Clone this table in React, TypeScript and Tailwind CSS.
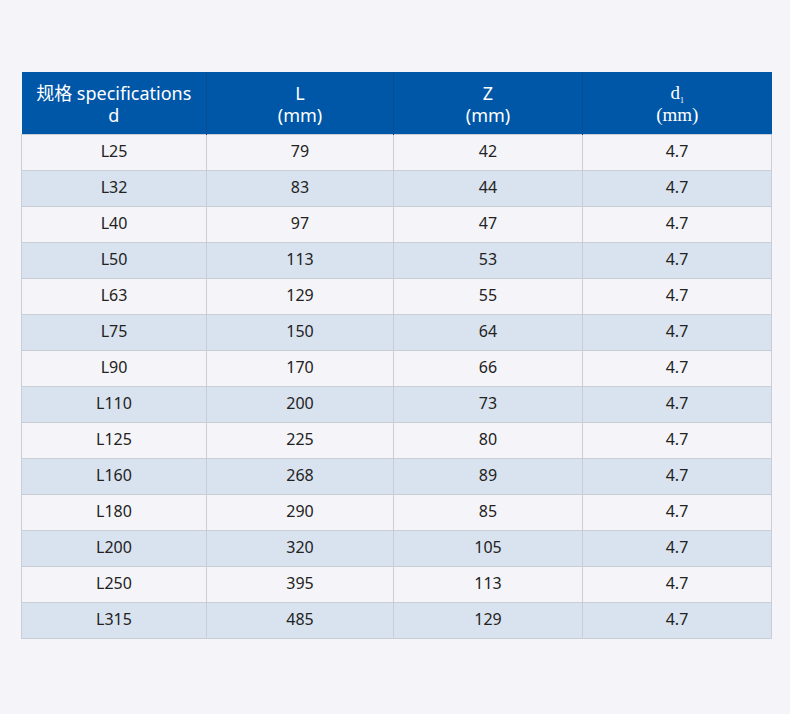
const rows: [string, string, string, string][] = [
  ["L25", "79", "42", "4.7"],
  ["L32", "83", "44", "4.7"],
  ["L40", "97", "47", "4.7"],
  ["L50", "113", "53", "4.7"],
  ["L63", "129", "55", "4.7"],
  ["L75", "150", "64", "4.7"],
  ["L90", "170", "66", "4.7"],
  ["L110", "200", "73", "4.7"],
  ["L125", "225", "80", "4.7"],
  ["L160", "268", "89", "4.7"],
  ["L180", "290", "85", "4.7"],
  ["L200", "320", "105", "4.7"],
  ["L250", "395", "113", "4.7"],
  ["L315", "485", "129", "4.7"],
];

export default function App() {
  return (
    <div className="w-[790px] h-[714px] bg-[#f5f5f9] pt-[72px] pl-[21px] font-['Noto_Sans','Noto_Sans_CJK_SC',sans-serif] text-[16px] text-[#222]">
      <table className="w-[750px] table-fixed border-collapse">
        <colgroup>
          <col className="w-[185px]" />
          <col className="w-[187px]" />
          <col className="w-[189px]" />
          <col className="w-[189px]" />
        </colgroup>
        <thead>
          <tr className="h-[62px] bg-[#0057a8] text-white text-[18px] leading-[22px]">
            <th className="font-normal border-r border-[#0b4c8e] pt-[2px]">
              规格 specifications
              <br />d
            </th>
            <th className="font-normal border-r border-[#0b4c8e] pt-[2px]">
              L<br />(mm)
            </th>
            <th className="font-normal border-r border-[#0b4c8e] pt-[2px]">
              Z<br />(mm)
            </th>
            <th className="font-normal font-['Liberation_Serif',serif] text-[19px] pt-[2px]">
              d<sub className="text-[8px] align-[-2px]">1</sub>
              <br />(mm)
            </th>
          </tr>
        </thead>
        <tbody>
          {rows.map((r, i) => (
            <tr
              key={r[0]}
              className={`h-[36px] ${i % 2 === 1 ? "bg-[#d9e3ef]" : "bg-[#f5f5f9]"}`}
            >
              {r.map((c, j) => (
                <td
                  key={j}
                  className="text-center border border-[#c9cdd5] p-0 pb-[2px] leading-none"
                >
                  {c}
                </td>
              ))}
            </tr>
          ))}
        </tbody>
      </table>
    </div>
  );
}
